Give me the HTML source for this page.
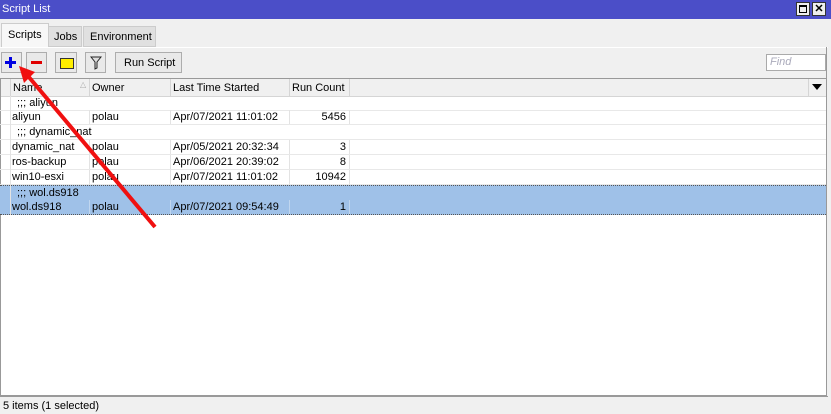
<!DOCTYPE html><html><head><style>
body{margin:0;width:831px;height:414px;background:#f0f0f0;font-family:"Liberation Sans",sans-serif;font-size:11px;position:relative;overflow:hidden;color:#000}
.a{position:absolute}
.btn{position:absolute;top:52px;height:21px;border:1px solid #adadad;background:#e9e9e9;box-sizing:border-box}
.row{position:absolute;left:0;width:826px;height:15px;border-bottom:1px solid #e8e8e8;box-sizing:border-box}
.c{position:absolute;top:0;height:14px;line-height:14px;border-right:1px solid #e3e3e3;box-sizing:border-box;padding-left:2px;white-space:nowrap}
.sel{background:#9fc1e8}
</style></head><body>
<div class="a" style="left:0;top:0;width:831px;height:19px;background:#4b4ec8"></div>
<div class="a" style="left:2px;top:3px;color:#fff;font-size:11px">Script List</div>
<div class="a" style="left:796px;top:2px;width:14px;height:14px;background:#eee;border:1px solid #333;box-sizing:border-box"><div style="margin:2px;width:6px;height:5px;border:1px solid #000;border-top-width:2px"></div></div>
<div class="a" style="left:812px;top:2px;width:14px;height:14px;background:#eee;border:1px solid #333;box-sizing:border-box;font-weight:bold;font-size:11px;line-height:12px;text-align:center">✕</div>
<div class="a" style="left:1px;top:23px;width:46px;height:24px;background:#f7f7f7;border:1px solid #ccc;border-bottom:none"></div>
<div class="a" style="left:8px;top:29px">Scripts</div>
<div class="a" style="left:48px;top:26px;width:34px;height:21px;background:#e0e0e0;border:1px solid #ccc;box-sizing:border-box"></div>
<div class="a" style="left:54px;top:31px">Jobs</div>
<div class="a" style="left:83px;top:26px;width:73px;height:21px;background:#e0e0e0;border:1px solid #ccc;box-sizing:border-box"></div>
<div class="a" style="left:90px;top:31px">Environment</div>
<div class="a" style="left:0;top:47px;width:828px;height:1px;background:#fff"></div>
<div class="btn" style="left:1px;width:21px"><div class="a" style="left:3px;top:8px;width:11px;height:3px;background:#0000e0"></div><div class="a" style="left:7px;top:4px;width:3px;height:11px;background:#0000e0"></div></div>
<div class="btn" style="left:26px;width:21px"><div class="a" style="left:4px;top:8px;width:11px;height:3px;background:#e00000"></div></div>
<div class="btn" style="left:55px;width:22px"><div class="a" style="left:4px;top:5px;width:12px;height:9px;background:#ffef00;border:1px solid #333"></div></div>
<div class="btn" style="left:85px;width:21px"><svg class="a" style="left:4px;top:3px" width="12" height="14"><path d="M1 1H11L7 6V12L5 13V6Z" fill="#ddd" stroke="#222"/></svg></div>
<div class="btn" style="left:115px;width:67px;padding:4px 0 0 8px">Run Script</div>
<div class="a" style="left:766px;top:54px;width:60px;height:17px;background:#fff;border:1px solid #aaa;box-sizing:border-box;color:#aab;font-style:italic;padding-left:3px;line-height:15px">Find</div>
<div class="a" style="left:826px;top:47px;width:1px;height:350px;background:#999"></div>
<div class="a" style="left:0;top:78px;width:826px;height:318px;background:#fff;border:1px solid #999;border-right:none;box-sizing:border-box"></div>
<div class="a" style="left:1px;top:79px;width:825px;height:17px;background:#f0f0f0;border-bottom:1px solid #d5d5d5"></div>
<div class="a" style="left:10px;top:79px;width:1px;height:17px;background:#d5d5d5"></div>
<div class="a" style="left:13px;top:82px">Name</div><div class="a" style="left:80px;top:80px;font-size:8px;color:#aaa">△</div>
<div class="a" style="left:89px;top:79px;width:1px;height:17px;background:#d5d5d5"></div>
<div class="a" style="left:92px;top:82px">Owner</div>
<div class="a" style="left:170px;top:79px;width:1px;height:17px;background:#d5d5d5"></div>
<div class="a" style="left:173px;top:82px">Last Time Started</div>
<div class="a" style="left:289px;top:79px;width:1px;height:17px;background:#d5d5d5"></div>
<div class="a" style="left:292px;top:82px">Run Count</div>
<div class="a" style="left:349px;top:79px;width:1px;height:17px;background:#d5d5d5"></div>
<div class="a" style="left:808px;top:79px;width:1px;height:17px;background:#d5d5d5"></div>
<div class="a" style="left:812px;top:84px;border:5px solid transparent;border-top:6px solid #000;border-bottom:none"></div>

<div class="row" style="top:96px"><div class="c" style="left:15px;border:none">;;; aliyun</div></div>
<div class="row" style="top:110px"><div class="c" style="left:10px;width:80px">aliyun</div><div class="c" style="left:90px;width:81px">polau</div><div class="c" style="left:171px;width:119px">Apr/07/2021 11:01:02</div><div class="c" style="left:290px;width:60px;text-align:right;padding-right:3px">5456</div></div>
<div class="row" style="top:125px"><div class="c" style="left:15px;border:none">;;; dynamic_nat</div></div>
<div class="row" style="top:140px"><div class="c" style="left:10px;width:80px">dynamic_nat</div><div class="c" style="left:90px;width:81px">polau</div><div class="c" style="left:171px;width:119px">Apr/05/2021 20:32:34</div><div class="c" style="left:290px;width:60px;text-align:right;padding-right:3px">3</div></div>
<div class="row" style="top:155px"><div class="c" style="left:10px;width:80px">ros-backup</div><div class="c" style="left:90px;width:81px">polau</div><div class="c" style="left:171px;width:119px">Apr/06/2021 20:39:02</div><div class="c" style="left:290px;width:60px;text-align:right;padding-right:3px">8</div></div>
<div class="row" style="top:170px"><div class="c" style="left:10px;width:80px">win10-esxi</div><div class="c" style="left:90px;width:81px">polau</div><div class="c" style="left:171px;width:119px">Apr/07/2021 11:01:02</div><div class="c" style="left:290px;width:60px;text-align:right;padding-right:3px">10942</div></div>
<div class="row sel" style="top:185px;border-top:1px dotted #555;border-bottom:none"><div class="c" style="left:15px;border:none">;;; wol.ds918</div></div>
<div class="row sel" style="top:200px;border-bottom:1px dotted #555"><div class="c" style="left:10px;width:80px;border-color:#c0d6ef">wol.ds918</div><div class="c" style="left:90px;width:81px;border-color:#c0d6ef">polau</div><div class="c" style="left:171px;width:119px;border-color:#c0d6ef">Apr/07/2021 09:54:49</div><div class="c" style="left:290px;width:60px;text-align:right;padding-right:3px;border-color:#c0d6ef">1</div></div>
<div class="a" style="left:10px;top:96px;width:1px;height:119px;background:#e3e3e3"></div>

<div class="a" style="left:0;top:396px;width:828px;height:1px;background:#999"></div>
<div class="a" style="left:3px;top:400px">5 items (1 selected)</div>
<svg class="a" style="left:0;top:0" width="831" height="414"><line x1="155" y1="227" x2="28" y2="76" stroke="#f01010" stroke-width="4"/><polygon points="19,66 35,72 24,83" fill="#f01010"/></svg>
</body></html>
